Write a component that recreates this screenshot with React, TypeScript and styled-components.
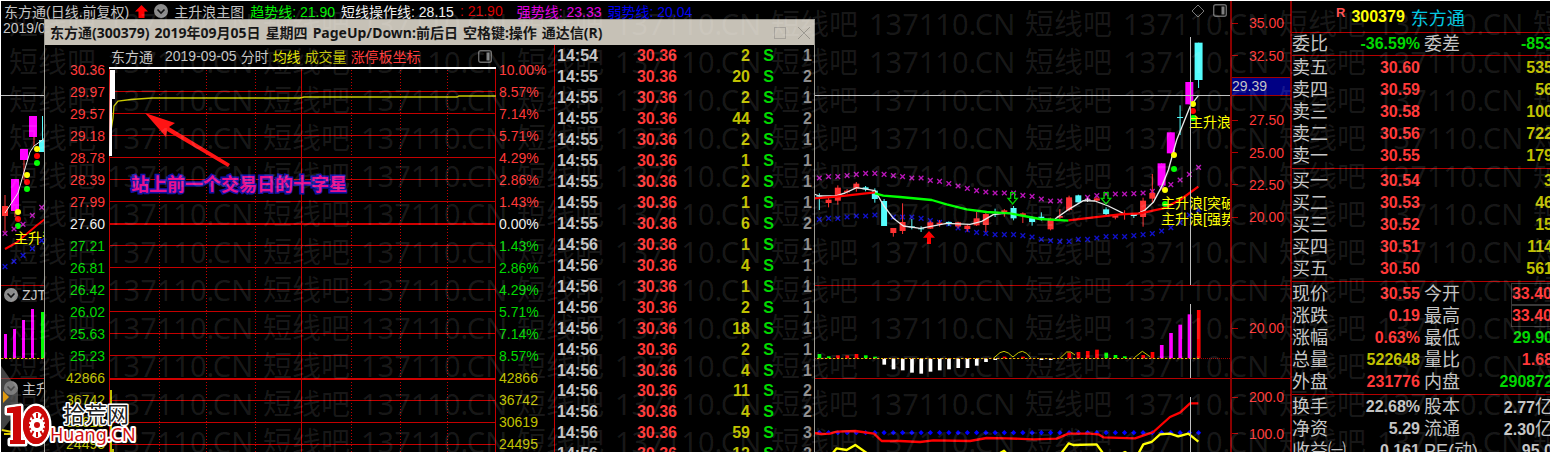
import React from 'react';
import styled, { createGlobalStyle } from 'styled-components';

const RED = '#ff3838';
const GREEN = '#00d800';
const YELLOW = '#c0c000';
const SILVER = '#c4c4c4';
const LINE = '#8a0000';
const CYAN = '#54fcfc';
const MAGENTA = '#ff00ff';

const Global = createGlobalStyle`
  * { box-sizing: border-box; }
  html, body, #root { height: 100%; }
  body {
    margin: 0;
    background: #fff;
    color: ${SILVER};
    font-family: "Liberation Sans", "Noto Sans CJK SC", sans-serif;
    font-size: 14px;
  }
`;

/* ---------- page frame ---------- */

const Page = styled.div`
  height: 100%;
  padding: 1px 2px 3px 1px;
`;

const Terminal = styled.main`
  position: relative;
  display: grid;
  grid-template-columns: minmax(0, 1fr) 60px 260px;
  height: 100%;
  overflow: hidden;
  background: #000;
`;

const Stack = styled.div`
  display: flex;
  flex-direction: column;
  min-width: 0;
  min-height: 0;
`;

const AxisStack = styled(Stack)`
  border-left: 2px solid ${LINE};
`;

const Panel = styled.section<{ $grow: number; $last?: boolean }>`
  position: relative;
  display: flex;
  flex-direction: column;
  flex: ${(p) => p.$grow} 1 0;
  min-height: 0;
  overflow: hidden;
  border-bottom: ${(p) => (p.$last ? 0 : 1)}px solid #b40000;
`;

const Row = styled.div`
  display: flex;
  align-items: center;
  white-space: nowrap;
`;

const Indicators = styled(Row)`
  flex: none;
  height: 20px;
  padding: 0 3px;
  gap: 6px;
`;

const Indicator = styled.span<{ $color: string; $spaced?: boolean }>`
  margin-right: ${(p) => (p.$spaced ? 8 : 0)}px;
  color: ${(p) => p.$color};
`;

const Tools = styled.span`
  display: flex;
  gap: 8px;
  margin-left: auto;
`;

const IconButton = styled.button`
  display: flex;
  padding: 0;
  border: 0;
  background: none;
  color: inherit;
`;

const DateLine = styled.div`
  flex: none;
  height: 14px;
  padding-left: 2px;
  line-height: 14px;
`;

const PanelTitle = styled(Row)`
  flex: none;
  height: 18px;
  padding-left: 3px;
  gap: 4px;
`;

const Drawing = styled.svg`
  display: block;
  flex: 1 1 0;
  width: 100%;
  min-height: 0;
`;

/* ---------- price axis ---------- */

const Scale = styled.div<{ $rows: number; $top?: number; $bottom?: number }>`
  display: grid;
  grid-template-rows: repeat(${(p) => p.$rows}, 1fr);
  height: 100%;
  padding: ${(p) => p.$top ?? 0}px 6px ${(p) => p.$bottom ?? 0}px 0;
  color: ${RED};
  text-align: right;
`;

const ScaleLabel = styled.div`
  display: flex;
  align-items: center;
  justify-content: space-between;
  &::before {
    content: "";
    width: 6px;
    border-top: 1px solid #b40000;
  }
`;

const Cursor = styled.div`
  position: absolute;
  top: 76px;
  left: 0;
  right: 0;
  height: 19px;
  border-top: 1px solid #a00000;
  border-bottom: 1px solid #a00000;
  background: #000084;
  color: ${SILVER};
  line-height: 17px;
`;

/* ---------- quote board ---------- */

const Quote = styled.aside`
  overflow: hidden;
  border-left: 2px solid ${LINE};
  font-size: 18px;
`;

const QuoteHead = styled(Row)`
  height: 31px;
  padding: 0 0 0 44px;
  gap: 6px;
`;

const Flag = styled.sup`
  align-self: flex-start;
  padding-top: 4px;
  color: #ff5050;
  font-size: 13px;
  font-weight: bold;
`;

const Code = styled.strong`
  color: #ffff00;
  font-size: 16px;
`;

const Name = styled.span`
  color: #00c8e0;
`;

const QuoteTable = styled.table<{ $row?: number }>`
  width: calc(100% + 3px);
  table-layout: fixed;
  border-collapse: separate;
  border-spacing: 0;
  border-top: 1px solid #b40000;
  padding: 1px 0;
  th, td { height: ${(p) => p.$row ?? 22}px; }
`;

const Label = styled.th`
  padding: 0;
  font-weight: normal;
  line-height: 20px;
  text-align: left;
  white-space: nowrap;
  td + & { padding-left: 4px; }
`;

const Value = styled.td<{ $color: string; $boxed?: boolean }>`
  padding: 0;
  color: ${(p) => p.$color};
  font-size: 16px;
  font-weight: bold;
  line-height: 20px;
  text-align: right;
  white-space: nowrap;
  span {
    display: inline-block;
    border: ${(p) => (p.$boxed ? '1px solid #383838' : '0')};
  }
`;

const Unit = styled.em`
  font-size: 18px;
  font-style: normal;
  font-weight: normal;
`;

/* ---------- intraday window ---------- */

const Window = styled.section`
  position: absolute;
  top: 18px;
  bottom: 0;
  left: 43px;
  display: flex;
  flex-direction: column;
  width: 771px;
  border: 1px solid #9c9a92;
  border-bottom: 0;
  background: #000;
`;

const TitleBar = styled.header`
  display: flex;
  flex: none;
  align-items: center;
  gap: 10px;
  height: 25px;
  padding: 0 3px 0 5px;
  background: #c6c1b6;
  color: #141414;
  white-space: nowrap;
`;

const Title = styled.h1`
  display: flex;
  flex: 1;
  gap: 5px;
  margin: 0;
  font-family: "Noto Sans", "Noto Sans CJK SC", sans-serif;
  font-size: 14px;
  font-weight: bold;
  line-height: 20px;
`;

const WindowBody = styled.div`
  display: grid;
  flex: 1 1 0;
  grid-template-columns: 510px minmax(0, 1fr);
  min-height: 0;
  overflow: hidden;
`;

const MinuteChart = styled.div`
  display: grid;
  grid-template-columns: 64px minmax(0, 1fr) 58px;
  grid-template-rows: minmax(0, 1fr);
  overflow: hidden;
  border-right: 1px solid #c80000;
`;

const Ladder = styled.ol<{ $side: 'left' | 'right' }>`
  margin: 0;
  padding: 14px ${(p) => (p.$side === 'left' ? 4 : 0)}px 0 ${(p) => (p.$side === 'left' ? 0 : 3)}px;
  list-style: none;
  text-align: ${(p) => (p.$side === 'left' ? 'right' : 'left')};
`;

const Rung = styled.li<{ $color: string }>`
  height: 22px;
  color: ${(p) => p.$color};
  line-height: 22px;
`;

const Legend = styled(Row)`
  flex: none;
  gap: 4px;
  height: 22px;
  padding: 0 4px 0 2px;
`;

const LegendName = styled.span`
  margin-right: 8px;
`;

const TickTable = styled.table`
  width: 100%;
  height: calc(100% + 12px);
  margin-top: 1px;
  table-layout: fixed;
  border-spacing: 0;
  font-size: 16px;
  font-weight: bold;
  line-height: 18px;
`;

const Tick = styled.td<{ $color: string; $align?: 'left' | 'right' }>`
  padding: 0 2px;
  color: ${(p) => p.$color};
  text-align: ${(p) => p.$align ?? 'right'};
`;

/* ---------- overlays ---------- */

const Marks = styled.div`
  position: absolute;
  top: 4px;
  left: 8px;
  display: grid;
  grid-template-columns: repeat(7, 254px);
  grid-auto-rows: 38px;
  color: rgba(255, 255, 255, 0.1);
  font-family: "Noto Sans", "Noto Sans CJK SC", sans-serif;
  font-size: 29px;
  line-height: 38px;
  white-space: nowrap;
  pointer-events: none;
`;

const Mark = styled.span`
  display: flex;
  gap: 11px;
`;

const Brand = styled.svg`
  position: absolute;
  bottom: 0;
  left: 0;
`;

/* ---------- icons ---------- */

const Chevron = () => (
  <svg width="14" height="14" viewBox="0 0 14 14" aria-hidden="true">
    <circle cx="7" cy="7" r="7" fill="#8c8c8c" />
    <path d="M3.5 5.5 L7 9 L10.5 5.5" fill="none" stroke="#111" strokeWidth="1.6" />
  </svg>
);

const UpArrow = () => (
  <svg width="13" height="13" viewBox="0 0 13 13" aria-hidden="true">
    <path d="M6.5 0 L13 6.5 H9.5 V13 H3.5 V6.5 H0 Z" fill="#ff0000" />
  </svg>
);

const SidePane = () => (
  <svg width="14" height="13" viewBox="0 0 14 13" aria-hidden="true">
    <rect x="0.7" y="0.7" width="12.6" height="11.6" rx="2" fill="none" stroke="#6a6a6a" strokeWidth="1.4" />
    <rect x="8.5" y="2.5" width="3" height="8" fill="#808080" />
  </svg>
);

/* ---------- candle chart data: y values on a grid three times the drawing size ---------- */

const slotX = (i: number) => 58 + i * 27.75;

const UPPER = [84, 80, 80, 77, 73, 70, 70, 73, 77, 80, 84, 84, 91, 94, 101, 108, 115, 122, 126, 129, 129, 129, 136, 139, 147, 153, 153, 153, 147, 142, 137, 132, 132, 132, 131, 129, 124, 115, 104, 90, 73, 52];
const LOWER = [208, 205, 205, 201, 198, 198, 195, 198, 201, 201, 201, 205, 212, 217, 222, 234, 240, 247, 250, 254, 254, 254, 257, 261, 268, 272, 274, 274, 268, 268, 264, 260, 260, 260, 257, 254, 251, 243, 233, 218, 195, 180];

type Candle = [string, number, number, number, number];
const R = '#ff3232';
const CANDLES: Candle[] = [
  [CYAN, 130, 180, 137, 140], [R, 143, 172, 149, 159], [R, 106, 164, 113, 152], [R, 117, 131, 122, 127],
  [R, 96, 125, 101, 116], [CYAN, 108, 124, 112, 118], [CYAN, 115, 158, 122, 147], [CYAN, 147, 228, 153, 228],
  [R, 234, 260, 234, 249], [R, 160, 252, 216, 243], [CYAN, 207, 238, 229, 232], [CYAN, 229, 246, 235, 238],
  [R, 212, 237, 217, 236], [R, 210, 230, 218, 223], [CYAN, 214, 228, 216, 221], [R, 215, 235, 217, 229],
  [R, 222, 245, 227, 237], [R, 186, 228, 205, 226], [R, 186, 246, 192, 225], [CYAN, 176, 201, 186, 189],
  [R, 177, 200, 181, 190], [CYAN, 168, 211, 174, 205], [R, 187, 219, 190, 197], [CYAN, 200, 227, 204, 216],
  [CYAN, 187, 212, 200, 208], [R, 203, 241, 206, 238], [R, 177, 209, 198, 203], [R, 137, 184, 142, 180],
  [CYAN, 134, 158, 136, 157], ['#e8e8e8', 143, 156, 148, 151], [R, 140, 157, 145, 152], [CYAN, 172, 196, 178, 192],
  [R, 192, 208, 195, 203], [R, 181, 209, 189, 192], [CYAN, 190, 204, 195, 198], [R, 143, 230, 152, 201],
  [R, 72, 158, 129, 146], [MAGENTA, 40, 107, 40, 107], [MAGENTA, -53, 10, -53, 10], [CYAN, -134, -45, -99, -96],
  [MAGENTA, -204, -137, -204, -137], [CYAN, -322, -186, -322, -210],
];

const FLOW: [number, number, string][] = [
  [0, 609, '#00ff00'], [1, 616, '#00ff00'], [2, 613, '#ff0000'], [3, 613, '#ff0000'], [4, 609, '#ff0000'],
  [5, 613, '#00ff00'], [6, 617, '#00ff00'], [7, 641, '#fff'], [8, 655, '#fff'], [9, 658, '#fff'], [10, 665, '#fff'],
  [11, 668, '#fff'], [12, 662, '#fff'], [13, 658, '#fff'], [14, 655, '#fff'], [15, 651, '#fff'], [16, 651, '#fff'],
  [17, 644, '#fff'], [18, 633, '#fff'], [19, 627, '#fff'], [20, 617, '#ff0000'], [22, 617, '#ff0000'],
  [24, 627, '#fff'], [25, 627, '#fff'], [27, 605, '#ff0000'], [28, 603, '#ff0000'], [29, 600, '#ff0000'],
  [30, 596, '#ff0000'], [31, 605, '#00ff00'], [32, 612, '#00ff00'], [33, 616, '#00ff00'], [35, 612, '#ff0000'],
  [36, 603, '#ff0000'], [37, 582, MAGENTA], [38, 546, MAGENTA], [39, 521, MAGENTA], [40, 490, MAGENTA], [41, 477, '#ff0000'],
];

const Cross = ({ x, y, color }: { x: number; y: number; color: string }) => (
  <path d={`M${x - 7} ${y - 7} l14 14 m0 -14 l-14 14`} stroke={color} strokeWidth="4" fill="none" />
);

const Dots = ({ x, y, colors }: { x: number; y: number; colors: string[] }) => (
  <>
    {colors.map((c, i) => (c ? <circle key={i} cx={x} cy={y + i * 7} r="3" fill={c} /> : null))}
  </>
);

const BuyMark = ({ x, y, children }: { x: number; y: number; children: React.ReactNode }) => (
  <text x={x} y={y} fill="#ffff00" fontSize="14">{children}</text>
);

const HollowArrow = ({ x, y }: { x: number; y: number }) => (
  <path d={`M${x - 6} ${y} h12 v17 h8 l-14 17 l-14 -17 h8 z`} fill="none" stroke="#00d000" strokeWidth="4" />
);

const CandleChart = () => (
  <Drawing viewBox="1 35 1229 250" preserveAspectRatio="xMaxYMin slice" role="img" aria-label="日线">
    <path d="M5 195 V232" stroke={R} />
    <rect x="2" y="206" width="6" height="10" fill={R} />
    <path d="M15 179 V217 M24 149 V180 M34 120 V146" stroke={R} />
    <rect x="11" y="179" width="8" height="32" fill={MAGENTA} />
    <rect x="20" y="149" width="8" height="11" fill={MAGENTA} />
    <rect x="29" y="116" width="8" height="21" fill={MAGENTA} />
    <path d="M42.500 116 V150" stroke={CYAN} />
    <rect x="39" y="140" width="6" height="12" fill={CYAN} />
    <path d="M5 213 L18 193 L24 172 L30 152 L34 146 L45 138" stroke="#eee" fill="none" />
    <Dots x={37} y={149} colors={['#ffff00', '#ff0000', '#00ff00']} />
    <Dots x={27} y={175} colors={['#ffff00', '#ff0000', '#00ff00']} />
    <Dots x={18} y={212} colors={['#ffff00', '#ff0000', '#00ff00']} />
    <path d="M5 249 L16 243 L36 226 L45 219" stroke="#ff0000" strokeWidth="2" fill="none" />
    <BuyMark x={14} y={243}>主升浪</BuyMark>

    <g transform="translate(800 150) scale(0.33333)">
      {UPPER.map((y, i) => <Cross key={i} x={slotX(i)} y={y} color="#b814b8" />)}
      {LOWER.map((y, i) => <Cross key={i} x={slotX(i)} y={y} color="#1010c8" />)}
      {[[-2385, 250], [-2358, 237], [-2331, 223], [-2303, 196], [-2275, 172]].map(([x, y]) => (
        <Cross key={x} x={x} y={y} color="#b814b8" />
      ))}
      {[[-2385, 350], [-2358, 334], [-2331, 316], [-2303, 296], [-2275, 272]].map(([x, y]) => (
        <Cross key={x} x={x} y={y} color="#1010d0" />
      ))}
      {CANDLES.map(([c, top, bottom, open, close], i) => (
        <g key={i} fill={c}>
          <rect x={slotX(i) - 1.5} y={top} width="3" height={bottom - top} />
          <rect x={slotX(i) - (i > 36 && i !== 39 ? 12 : 9)} y={open} width={i > 36 && i !== 39 ? 24 : 18} height={close - open} />
        </g>
      ))}
      <g fill="none" strokeLinejoin="round">
        <path d="M42 132 L58 138 L110 137 L135 129 L170 113 L225 122 L250 165 L280 205 L310 228 L361 235 L440 220 L510 223 L545 214 L580 194 L612 190 L640 190 M765 207 L806 178 L850 152 L885 153 L925 168 L970 190 L1005 195 L1035 180 L1060 157 L1085 110 L1105 60 L1130 -30 L1170 -130 L1195 -163" stroke="#e8e8e8" strokeWidth="4" />
        <path d="M42 145 L110 140 L225 127 M805 211 L900 200 L960 193 L1020 190 L1090 175 L1140 150 L1195 110" stroke="#ff0000" strokeWidth="7" />
        <path d="M225 130 L250 137 L300 141 L395 150 L440 163 L500 178 L560 186 L630 190 L720 207 L805 212" stroke="#00ff00" strokeWidth="7" />
      </g>
      <HollowArrow x={638} y={128} />
      <HollowArrow x={918} y={128} />
      <path d="M387 243 L405 263 H393 V282 H381 V263 H369 Z" fill="#ff0000" />
    </g>
    <Dots x={1193} y={104} colors={['#ffff00', '#ff0000', '#00ff00']} />
    <Dots x={1174} y={155} colors={['#ffff00', '', '#00ff00']} />
    <Dots x={1165} y={190} colors={['#ffff00', '', '#00ff00']} />
    <BuyMark x={1189} y={127}>主升浪</BuyMark>
    <BuyMark x={1161} y={208}>主升浪[突破]</BuyMark>
    <BuyMark x={1161} y={224}>主升浪[强势]</BuyMark>
    <path d="M1 95.500 H1231 M1190.500 37 V285" stroke="#c0c0c0" />
  </Drawing>
);

const FlowChart = () => (
  <Drawing viewBox="1 303 1229 75" preserveAspectRatio="xMaxYMin slice" role="img" aria-label="ZJT">
    <path d="M4 333 h3 v24 h-3z M13 328 h3 v29 h-3z M22 319 h3 v38 h-3z M31 308 h3 v49 h-3z" fill={MAGENTA} />
    <path d="M41 311 h4 v46 h-4z" fill="#00ff00" />
    <g transform="translate(800 150) scale(0.33333)">
      {FLOW.map(([i, y, c]) => (
        <rect key={i} x={slotX(i) - 5} y={Math.min(y, 622)} width="11" height={Math.abs(622 - y)} fill={c} />
      ))}
      <path d="M580 622 L600 605 L612 601 L625 606 L639 618 L655 605 L667 601 L680 607 L692 620 M780 622 L800 603 L812 603 L825 612 M1003 620 L1027 601 L1050 617" fill="none" stroke="#c8c800" strokeWidth="3" />
    </g>
    <path d="M1 357 H1230" stroke="#a00000" strokeDasharray="1 1" shapeRendering="crispEdges" />
    <path d="M1 357 H1200" stroke="#d8c000" strokeDasharray="2 2" shapeRendering="crispEdges" />
    <path d="M1190.500 303 V378" stroke="#c0c0c0" />
  </Drawing>
);

const StrengthChart = () => (
  <Drawing viewBox="1 396 1229 56" preserveAspectRatio="xMaxYMin slice" role="img" aria-label="主升">
    <g transform="translate(800 150) scale(0.33333)">
      {UPPER.map((_, i) => <path key={i} d={`M${slotX(i) - 8} 845 l8 -8 l8 8 l-8 8z`} fill="#0000ff" />)}
      <g fill="none" strokeLinejoin="round" strokeWidth="7">
        <path d="M42 846 L65 849 L90 848 L110 842 L166 840 L222 848 L245 870 L300 870 L360 873 L400 868 L510 870 L560 861 L620 862 L700 865 L770 863 L805 848 L870 848 L895 850 L910 859 L1005 862 L1040 850 L1060 843 L1110 798 L1140 785 L1170 757 L1195 757" stroke="#ff0000" />
        <path d="M97 908 L110 892 L140 897 L166 882 L203 908 M597 908 L612 899 L620 908 M783 908 L806 877 L820 882 L890 880 L910 908 M965 908 L975 903 L983 908 M1015 908 L1030 880 L1055 873 L1080 850 L1110 848 L1135 856 L1165 848 L1195 872" stroke="#ffff00" />
      </g>
    </g>
    <path d="M1190.500 396 V452" stroke="#c0c0c0" />
  </Drawing>
);

/* ---------- intraday window data ---------- */

const PRICES = ['30.36', '29.97', '29.57', '29.18', '28.78', '28.39', '27.99', '27.60', '27.21', '26.81', '26.42', '26.02', '25.63', '25.23'];
const PERCENTS = ['10.00%', '8.57%', '7.14%', '5.71%', '4.29%', '2.86%', '1.43%', '0.00%', '1.43%', '2.86%', '4.29%', '5.71%', '7.14%', '8.57%'];
const VOLUMES = ['42866', '36742', '30619', '24495'];

const rungColor = (i: number) => (i < 7 ? RED : i === 7 ? '#f0f0f0' : i < 14 ? GREEN : YELLOW);

const TICKS: [string, number, number][] = [
  ['14:54', 2, 1], ['14:55', 20, 2], ['14:55', 2, 1], ['14:55', 44, 2], ['14:55', 2, 1],
  ['14:55', 1, 1], ['14:55', 2, 1], ['14:55', 1, 1], ['14:55', 6, 2], ['14:56', 1, 1],
  ['14:56', 4, 1], ['14:56', 1, 1], ['14:56', 2, 1], ['14:56', 18, 1], ['14:56', 2, 1],
  ['14:56', 4, 1], ['14:56', 11, 2], ['14:56', 4, 2], ['14:56', 59, 3], ['14:56', 12, 2],
];

const GRID_Y = [91, 113, 135, 157, 179, 201, 245, 267, 289, 311, 333, 355, 400, 422, 444];
const GRID_X = [159, 206, 255, 351, 400, 447];

const PriceLadder = ({ side, values }: { side: 'left' | 'right'; values: string[] }) => (
  <Ladder $side={side}>
    {[...values, ...VOLUMES].map((v, i) => <Rung key={i} $color={rungColor(i)}>{v}</Rung>)}
  </Ladder>
);

const Note = styled.text`
  fill: #e81090;
  stroke: #1414a8;
  stroke-width: 3px;
  paint-order: stroke;
  font-size: 18px;
  font-weight: bold;
`;

const MinutePlot = () => (
  <Drawing viewBox="109 67 387 385" preserveAspectRatio="xMinYMin slice" role="img" aria-label="分时">
    <g fill="#c40000" shapeRendering="crispEdges">
      {GRID_Y.map((y) => <rect key={y} x="109" y={y} width="387" height="1" />)}
      {[109, 301, 495].map((x) => <rect key={x} x={x} y="67" width="1" height="385" />)}
    </g>
    <g stroke="#c40000" strokeDasharray="1 2" shapeRendering="crispEdges">
      {GRID_X.map((x) => <line key={x} x1={x + 0.5} x2={x + 0.5} y1="70" y2="452" />)}
    </g>
    <path d="M109 224 H496 M109 379 H496" stroke="#d00000" strokeWidth="2" />
    <path d="M110 390 h2 v62 h-2z M112 449 h2 v3 h-2z" fill={YELLOW} />
    <path d="M111 131 L113 118 L114 106 L118 101 L131 99.500 L152 98 H300 L304 97 H457 L459 96 H496" fill="none" stroke="#c8c800" strokeWidth="1.300" />
    <path d="M109 68 H496" stroke="#fff" strokeWidth="2" />
    <path d="M110 70 h5 v29 h-3 v57 h-3z" fill="#fff" />
    <path d="M145 113 L175 123 L169 127 L230 164 L228 167 L167 131 L166 137 Z" fill="#ff1414" />
    <Note x="131" y="191">站上前一个交易日的十字星</Note>
  </Drawing>
);

const IntradayWindow = () => (
  <Window>
    <TitleBar>
      <Title>
        <span>东方通(300379)</span>
        <span>2019年09月05日</span>
        <span>星期四</span>
        <span>PageUp/Down:前后日</span>
        <span>空格键:操作</span>
        <span>通达信(R)</span>
      </Title>
      <IconButton aria-label="最大化">
        <svg width="14" height="14" viewBox="0 0 14 14"><rect x="1.500" y="1.500" width="11" height="11" fill="none" stroke="#a5a19a" /></svg>
      </IconButton>
      <IconButton aria-label="关闭">
        <svg width="14" height="14" viewBox="0 0 14 14"><path d="M1 1 L13 13 M13 1 L1 13" stroke="#98948c" /></svg>
      </IconButton>
    </TitleBar>
    <WindowBody>
      <MinuteChart>
        <PriceLadder side="left" values={PRICES} />
        <Stack>
          <Legend>
            <LegendName>东方通</LegendName>
            <span>2019-09-05</span>
            <span>分时</span>
            <Indicator $color="#e0e000">均线</Indicator>
            <Indicator $color={YELLOW}>成交量</Indicator>
            <Indicator $color={RED}>涨停板坐标</Indicator>
            <Tools><IconButton aria-label="侧栏"><SidePane /></IconButton></Tools>
          </Legend>
          <MinutePlot />
        </Stack>
        <PriceLadder side="right" values={PERCENTS} />
      </MinuteChart>
      <TickTable>
        <colgroup>
          <col width="46" /><col width="78" /><col width="73" /><col width="24" /><col />
        </colgroup>
        <tbody>
          {TICKS.map(([time, volume, count], i) => (
            <tr key={i}>
              <Tick $color={SILVER} $align="left">{time}</Tick>
              <Tick $color={RED}>30.36</Tick>
              <Tick $color={YELLOW}>{volume}</Tick>
              <Tick $color={GREEN}>S</Tick>
              <Tick $color="#8c8c8c">{count}</Tick>
            </tr>
          ))}
        </tbody>
      </TickTable>
    </WindowBody>
  </Window>
);

/* ---------- quote board ---------- */

type Cell = [string, string, string, boolean?];
const ASKS: [string, string, string][] = [
  ['卖五', '30.60', '535'], ['卖四', '30.59', '56'], ['卖三', '30.58', '100'], ['卖二', '30.56', '722'], ['卖一', '30.55', '179'],
];
const BIDS: [string, string, string][] = [
  ['买一', '30.54', '3'], ['买二', '30.53', '46'], ['买三', '30.52', '15'], ['买四', '30.51', '114'], ['买五', '30.50', '561'],
];
const RATIO: [Cell, Cell][] = [[['委比', '-36.59%', GREEN], ['委差', '-853', GREEN]]];
const STATS: [Cell, Cell][] = [
  [['现价', '30.55', RED], ['今开', '33.40', RED, true]],
  [['涨跌', '0.19', RED], ['最高', '33.40', RED, true]],
  [['涨幅', '0.63%', RED], ['最低', '29.90', GREEN]],
  [['总量', '522648', YELLOW], ['量比', '1.68', RED]],
  [['外盘', '231776', RED], ['内盘', '290872', GREEN]],
];
const BASICS: [Cell, Cell][] = [
  [['换手', '22.68%', SILVER], ['股本', '2.77亿', SILVER]],
  [['净资', '5.29', SILVER], ['流通', '2.30亿', SILVER]],
  [['收益㈠', '0.161', SILVER], ['PE(动)', '95.0', SILVER]],
];

const Columns = () => (
  <colgroup><col width="38" /><col width="90" /><col width="56" /><col /></colgroup>
);

const Figure = ({ cell: [label, value, color, boxed] }: { cell: Cell }) => (
  <>
    <Label scope="row">{label}</Label>
    <Value $color={color} $boxed={boxed}>
      <span>{value.replace('亿', '')}{value.endsWith('亿') && <Unit>亿</Unit>}</span>
    </Value>
  </>
);

const Figures = ({ rows, row }: { rows: [Cell, Cell][]; row?: number }) => (
  <QuoteTable $row={row}>
    <Columns />
    <tbody>
      {rows.map(([a, b]) => <tr key={a[0]}><Figure cell={a} /><Figure cell={b} /></tr>)}
    </tbody>
  </QuoteTable>
);

const Levels = ({ rows }: { rows: [string, string, string][] }) => (
  <QuoteTable>
    <Columns />
    <tbody>
      {rows.map(([label, price, volume]) => (
        <tr key={label}>
          <Label scope="row">{label}</Label>
          <Value $color={RED}>{price}</Value>
          <Value $color={YELLOW} colSpan={2}>{volume}</Value>
        </tr>
      ))}
    </tbody>
  </QuoteTable>
);

const GEAR = Array.from({ length: 12 }, (_, i) => i * 30);

const Logo = () => (
  <Brand width="140" height="92" viewBox="1 360 140 92" role="img" aria-label="10 拾荒网 Huang.CN">
    <path d="M1 366 L18 390 V410 L1 432 Z" fill="#707070" opacity="0.6" />
    <path d="M3 391 L9 397 L3 403 Z" fill="#e09a10" />
    <path d="M2 430 L12 432 M4 434 H14" stroke="#e0d000" strokeWidth="2" />
    <g stroke="#fff" strokeWidth="5" strokeLinejoin="round" style={{ paintOrder: 'stroke' }}>
      <path d="M7 408 L21 406 V440 H25 V444 H10 V440 H13 V413 H7 Z" fill="#cc0808" />
      <ellipse cx="36" cy="425" rx="13" ry="19" fill="#cc0808" />
      <text x="50" y="441" fill="#d01010" fontFamily="Noto Sans" fontSize="18" strokeWidth="4">Huang.CN</text>
      <text x="63" y="422" fill="#202020" fontSize="22" strokeWidth="3">拾荒网</text>
    </g>
    <path d="M7 408 L21 406 V440 H25 V444 H10 V440 H13 V413 H7 Z" fill="#cc0808" />
    <ellipse cx="36" cy="425" rx="13" ry="19" fill="#cc0808" />
    <ellipse cx="37" cy="425" rx="8" ry="13" fill="#fff" />
    {GEAR.map((a) => (
      <rect key={a} x="36" y="413" width="2" height="5" fill="#cc0808" transform={`rotate(${a} 37 425)`} />
    ))}
    <circle cx="37" cy="425" r="3" fill="#cc0808" />
  </Brand>
);

const MARK_COUNT = 7 * 12;

export default function App() {
  return (
    <>
      <Global />
      <Page>
        <Terminal>
          <Stack>
            <Panel $grow={285}>
              <Indicators>
                <span>东方通(日线.前复权)</span>
                <UpArrow />
                <IconButton aria-label="主图指标"><Chevron /></IconButton>
                <span>主升浪主图</span>
                <Indicator $color="#00f000">趋势线: 21.90</Indicator>
                <Indicator $color="#f0f0f0">短线操作线: 28.15</Indicator>
                <Indicator $color="#d80000" $spaced>: 21.90</Indicator>
                <Indicator $color="#e000e0">强势线: 23.33</Indicator>
                <Indicator $color="#0000f0">弱势线: 20.04</Indicator>
                <Tools>
                  <svg width="14" height="14" viewBox="0 0 14 14" aria-hidden="true">
                    <path d="M7 1 L13 7 L7 13 L1 7 Z" fill="none" stroke="#777" />
                  </svg>
                  <IconButton aria-label="侧栏"><SidePane /></IconButton>
                </Tools>
              </Indicators>
              <DateLine>2019/09/05</DateLine>
              <CandleChart />
            </Panel>
            <Panel $grow={93}>
              <PanelTitle><IconButton aria-label="指标"><Chevron /></IconButton>ZJT</PanelTitle>
              <FlowChart />
            </Panel>
            <Panel $grow={73} $last>
              <PanelTitle><IconButton aria-label="指标"><Chevron /></IconButton>主升</PanelTitle>
              <StrengthChart />
            </Panel>
          </Stack>
          <AxisStack>
            <Panel $grow={285}>
              <Scale $rows={8} $top={6} $bottom={19}>
                <ScaleLabel>35.00</ScaleLabel>
                <ScaleLabel>32.50</ScaleLabel>
                <span />
                <ScaleLabel>27.50</ScaleLabel>
                <ScaleLabel>25.00</ScaleLabel>
                <ScaleLabel>22.50</ScaleLabel>
                <ScaleLabel>20.00</ScaleLabel>
              </Scale>
              <Cursor>29.39</Cursor>
            </Panel>
            <Panel $grow={93}>
              <Scale $rows={1} $bottom={8}><ScaleLabel>20.00</ScaleLabel></Scale>
            </Panel>
            <Panel $grow={73} $last>
              <Scale $rows={2}>
                <ScaleLabel>200.0</ScaleLabel>
                <ScaleLabel>100.0</ScaleLabel>
              </Scale>
            </Panel>
          </AxisStack>
          <Quote>
            <QuoteHead><Flag>R</Flag><Code>300379</Code><Name>东方通</Name></QuoteHead>
            <Figures rows={RATIO} row={20} />
            <Levels rows={ASKS} />
            <Levels rows={BIDS} />
            <Figures rows={STATS} />
            <Figures rows={BASICS} />
          </Quote>
          <IntradayWindow />
          <Marks aria-hidden="true">
            {Array.from({ length: MARK_COUNT }, (_, i) => (
              <Mark key={i}><span>短线吧</span><span>137110.CN</span></Mark>
            ))}
          </Marks>
          <Logo />
        </Terminal>
      </Page>
    </>
  );
}
